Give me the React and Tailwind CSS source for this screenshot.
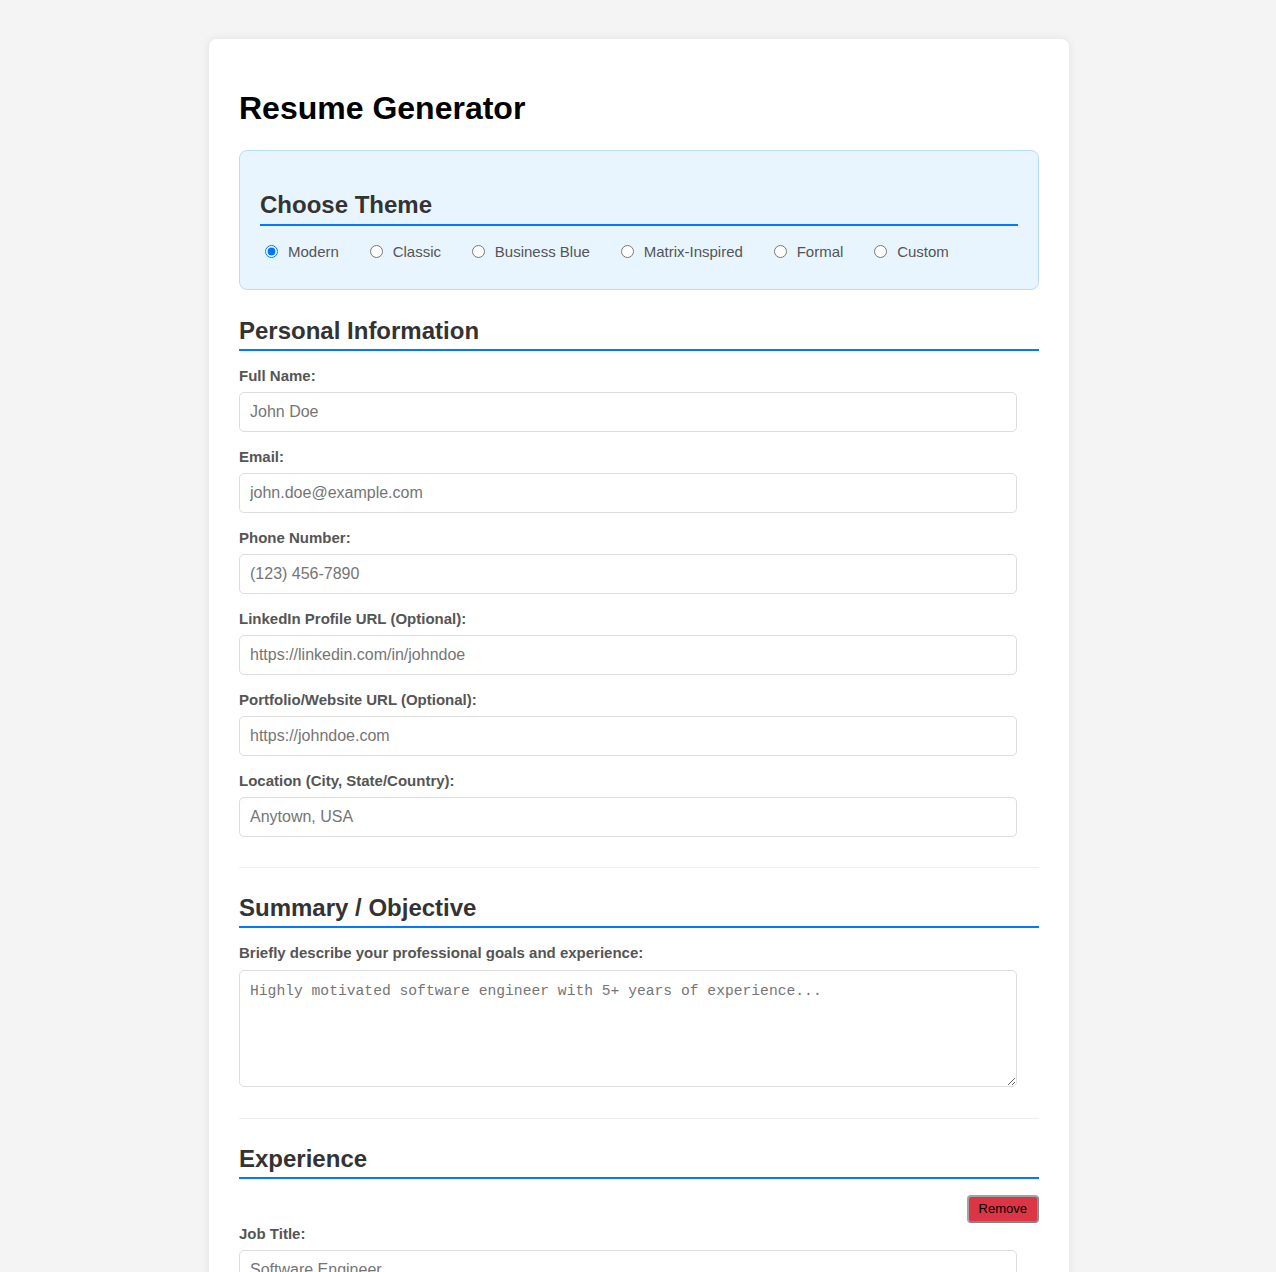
import { useState } from 'react'

const THEMES = ['Modern', 'Classic', 'Business Blue', 'Matrix-Inspired', 'Formal', 'Custom']

const PERSONAL_FIELDS = [
  { id: 'fullName', label: 'Full Name:', placeholder: 'John Doe' },
  { id: 'email', label: 'Email:', placeholder: 'john.doe@example.com' },
  { id: 'phone', label: 'Phone Number:', placeholder: '(123) 456-7890' },
  { id: 'linkedin', label: 'LinkedIn Profile URL (Optional):', placeholder: 'https://linkedin.com/in/johndoe' },
  { id: 'portfolio', label: 'Portfolio/Website URL (Optional):', placeholder: 'https://johndoe.com' },
  { id: 'location', label: 'Location (City, State/Country):', placeholder: 'Anytown, USA' },
]

function SectionTitle({ children }) {
  return (
    <h2 className="mb-4 border-b-2 border-[#007bff] pb-[4px] text-[24px] font-bold leading-[28px] text-[#333]">
      {children}
    </h2>
  )
}

function Field({ id, label, placeholder }) {
  return (
    <div className="mb-4">
      <label htmlFor={id} className="mb-2 block text-[15px] font-bold leading-[17px] text-[#555]">
        {label}
      </label>
      <input
        id={id}
        type="text"
        placeholder={placeholder}
        className="block h-[40px] w-[calc(100%-22px)] rounded-[5px] border border-[#ddd] bg-white px-[10px] text-[16px] text-[#333] outline-none placeholder:text-[#757575]"
      />
    </div>
  )
}

function TextArea({ id, label, placeholder }) {
  return (
    <div className="mb-4">
      <label htmlFor={id} className="mb-[9px] block text-[15px] font-bold leading-[17px] text-[#555]">
        {label}
      </label>
      <textarea
        id={id}
        placeholder={placeholder}
        className="block h-[117px] w-[calc(100%-22px)] rounded-[5px] border border-[#ddd] bg-white px-[10px] pt-[12px] font-['Liberation_Mono',monospace] text-[14.67px] leading-[17px] text-[#333] outline-none placeholder:text-[#757575]"
      />
    </div>
  )
}

export default function App() {
  const [theme, setTheme] = useState('Modern')

  return (
    <div className="min-h-screen bg-[#f4f4f4] pb-[40px] pl-[2px] pt-[39px] font-['Liberation_Sans',Arial,sans-serif]">
      <div className="mx-auto w-[860px] rounded-[8px] bg-white p-[30px] shadow-[0_0_10px_rgba(0,0,0,0.08)]">
        <h1 className="mb-[23px] mt-[21px] text-[32px] font-bold leading-[37px] text-black">Resume Generator</h1>

        {/* Theme picker */}
        <div className="mb-[27px] rounded-[8px] border border-[#b8ddfb] bg-[#e8f4fe] px-[20px] pb-[28px] pt-[40px]">
          <h2 className="border-b-2 border-[#007bff] pb-[5px] text-[24px] font-bold leading-[28px] text-[#333]">
            Choose Theme
          </h2>
          <div className="mt-[15px] flex h-[20px] flex-wrap items-center gap-x-[25.8px]">
            {THEMES.map((name) => (
              <label key={name} className="flex cursor-pointer items-center text-[15px] leading-[17px] text-[#555]">
                <input
                  type="radio"
                  name="theme"
                  value={name}
                  checked={theme === name}
                  onChange={() => setTheme(name)}
                  className="ml-[5px] mr-[10px] h-[13px] w-[13px]"
                />
                {name}
              </label>
            ))}
          </div>
        </div>

        {/* Personal Information */}
        <div>
          <SectionTitle>Personal Information</SectionTitle>
          {PERSONAL_FIELDS.map((f) => (
            <Field key={f.id} {...f} />
          ))}
        </div>

        {/* Summary */}
        <div className="mt-[30px] border-t border-[#eee] pt-[26px]">
          <SectionTitle>Summary / Objective</SectionTitle>
          <TextArea
            id="summary"
            label="Briefly describe your professional goals and experience:"
            placeholder="Highly motivated software engineer with 5+ years of experience..."
          />
        </div>

        {/* Experience */}
        <div className="mt-[31px] border-t border-[#eee] pt-[26px]">
          <SectionTitle>Experience</SectionTitle>
          <div className="mb-[2px] flex justify-end">
            <button className="flex h-[28px] items-center rounded-[4px] border-2 border-[#a3a3a3] border-b-[#858585] border-r-[#8c8c8c] bg-[#dc3545] px-[10px] text-[13px] text-black">
              Remove
            </button>
          </div>
          <Field id="jobTitle" label="Job Title:" placeholder="Software Engineer" />
          <Field id="company" label="Company:" placeholder="Tech Solutions Inc." />
          <Field id="startDate" label="Start Date:" placeholder="Jan 2020" />
          <Field id="endDate" label="End Date:" placeholder="Present" />
          <TextArea
            id="responsibilities"
            label="Responsibilities / Achievements:"
            placeholder="Developed and maintained web applications..."
          />
          <button className="mb-4 rounded-[5px] bg-[#28a745] px-[15px] py-[8px] text-[15px] text-white">
            Add Experience
          </button>
        </div>

        {/* Education */}
        <div className="mt-[30px] border-t border-[#eee] pt-[26px]">
          <SectionTitle>Education</SectionTitle>
          <Field id="degree" label="Degree:" placeholder="B.S. in Computer Science" />
          <Field id="school" label="Institution:" placeholder="State University" />
          <Field id="gradYear" label="Graduation Year:" placeholder="2018" />
        </div>

        {/* Skills */}
        <div className="mt-[30px] border-t border-[#eee] pt-[26px]">
          <SectionTitle>Skills</SectionTitle>
          <Field id="skills" label="Skills (comma separated):" placeholder="JavaScript, React, Node.js" />
        </div>

        <button className="mt-[10px] w-full rounded-[5px] bg-[#007bff] py-[12px] text-[18px] font-bold text-white">
          Generate Resume
        </button>
      </div>
    </div>
  )
}
